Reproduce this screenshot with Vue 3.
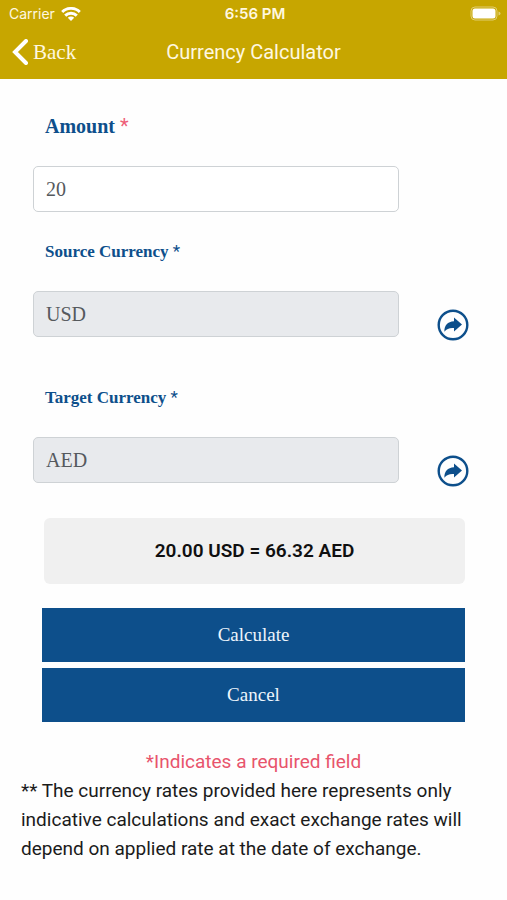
<script setup>
import { ref } from 'vue'

const amount = ref('20')
const source = ref('USD')
const target = ref('AED')
const rates = { 'USD-AED': 3.316 }
const result = ref('20.00 USD = 66.32 AED')

function calculate() {
  const value = Number(amount.value) || 0
  const rate = rates[`${source.value}-${target.value}`] ?? 1
  result.value = `${value.toFixed(2)} ${source.value} = ${(value * rate).toFixed(2)} ${target.value}`
}

function cancel() {
  amount.value = ''
  result.value = ''
}
</script>

<template>
  <div class="screen">
    <header class="top">
      <div class="status">
        <div class="carrier">
          <span>Carrier</span>
          <svg class="wifi" viewBox="0 0 20 14" aria-hidden="true">
            <path d="M1.2 5 A12.6 12.6 0 0 1 18.8 5" />
            <path d="M4.2 8.6 A8.2 8.2 0 0 1 15.8 8.6" />
            <path class="dot" d="M10 14 L6.8 10.8 A4.5 4.5 0 0 1 13.2 10.8 Z" />
          </svg>
        </div>
        <span class="time">6:56 PM</span>
        <svg class="battery" viewBox="0 0 31 15" aria-hidden="true">
          <rect class="shell" x="1" y="1" width="26" height="13" rx="4" />
          <rect class="charge" x="2.5" y="2.5" width="23" height="10" rx="2.5" />
          <path class="tip" d="M28.5 5.5 Q30.5 6 30.5 7.5 Q30.5 9 28.5 9.5 Z" />
        </svg>
      </div>
      <nav class="bar">
        <a class="back" href="#">
          <svg class="chevron" viewBox="0 0 16 26" aria-hidden="true">
            <path d="M14 2 L3 13 L14 24" />
          </svg>
          <span>Back</span>
        </a>
        <h1>Currency Calculator</h1>
      </nav>
    </header>

    <form class="form" @submit.prevent="calculate">
      <div class="field first">
        <label for="amount">Amount <span class="star">*</span></label>
        <div class="row">
          <input id="amount" v-model="amount" type="text" inputmode="decimal" />
        </div>
      </div>

      <div class="field second">
        <label for="source">Source Currency <span class="star">*</span></label>
        <div class="row">
          <input id="source" v-model="source" type="text" readonly />
          <button class="pick" type="button" aria-label="Choose source currency">
            <svg viewBox="0 0 32 32" aria-hidden="true">
              <circle cx="16" cy="16" r="14.3" />
              <path d="M17 8.6 L25 15.6 L17 22.4 V19 C12.8 18.6 9.8 19.6 7.4 22.8 C7.2 16.4 10.6 12.6 17 12.2 Z" />
            </svg>
          </button>
        </div>
      </div>

      <div class="field third">
        <label for="target">Target Currency <span class="star">*</span></label>
        <div class="row">
          <input id="target" v-model="target" type="text" readonly />
          <button class="pick" type="button" aria-label="Choose target currency">
            <svg viewBox="0 0 32 32" aria-hidden="true">
              <circle cx="16" cy="16" r="14.3" />
              <path d="M17 8.6 L25 15.6 L17 22.4 V19 C12.8 18.6 9.8 19.6 7.4 22.8 C7.2 16.4 10.6 12.6 17 12.2 Z" />
            </svg>
          </button>
        </div>
      </div>

      <output class="result" for="amount source target">{{ result }}</output>

      <div class="actions">
        <button type="submit">Calculate</button>
        <button type="button" @click="cancel">Cancel</button>
      </div>
    </form>

    <footer class="notes">
      <p class="required">*Indicates a required field</p>
      <p>** The currency rates provided here represents only indicative calculations and exact exchange rates will depend on applied rate at the date of exchange.</p>
    </footer>
  </div>
</template>

<style>
body {
  background: #fefefe;
}
</style>

<style scoped>
.screen {
  font-family: Roboto, "Liberation Sans", sans-serif;
  color: #1b1b1b;
}

.top {
  background: #c7a600;
  color: #fff8e0;
}

.status {
  display: grid;
  grid-template-columns: 1fr auto 1fr;
  align-items: center;
  height: 27px;
  padding: 0 6px 0 9px;
  font-family: Inter, sans-serif;
  font-size: 14px;
}

.carrier {
  display: flex;
  align-items: center;
  gap: 6px;
}

.wifi {
  width: 20px;
  height: 14px;
  fill: none;
  stroke: #fff;
  stroke-width: 2.9;
}

.wifi .dot {
  fill: #fff;
  stroke: none;
}

.time {
  font-size: 15px;
  font-weight: 600;
}

.battery {
  justify-self: end;
  width: 31px;
  height: 15px;
}

.shell {
  fill: none;
  stroke: #e0cd70;
}

.charge {
  fill: #fff;
}

.tip {
  fill: #e0cd70;
}

.bar {
  display: grid;
  grid-template-columns: 1fr auto 1fr;
  align-items: center;
  height: 52px;
  padding: 0 12px 2px;
  box-sizing: border-box;
}

.back {
  display: flex;
  align-items: center;
  gap: 5px;
  color: inherit;
  font-family: "Liberation Serif", serif;
  font-size: 21px;
  text-decoration: none;
}

.chevron {
  width: 16px;
  height: 26px;
  fill: none;
  stroke: #fff;
  stroke-width: 4;
  stroke-linecap: round;
}

h1 {
  margin: 0;
  font-size: 20px;
  font-weight: 400;
}

.form {
  padding: 35px 42px 0 33px;
}

.field label {
  display: block;
  padding-left: 12px;
  color: #0d4f8b;
  font-family: "Liberation Serif", serif;
  font-size: 17px;
  font-weight: 700;
  line-height: 24px;
}

.field.first label {
  font-size: 20px;
}

.star {
  font-family: Roboto, sans-serif;
  font-weight: 400;
  line-height: 1;
}

.first .star {
  color: #ee5f78;
}

.row {
  display: grid;
  grid-template-columns: 1fr 32px;
  gap: 38px;
  margin-right: -4px;
  padding-top: 27px;
}

.first .row {
  padding-top: 28px;
}

.second {
  padding-top: 28px;
}

.third {
  padding-top: 49px;
}

.row input {
  width: 100%;
  height: 46px;
  box-sizing: border-box;
  padding: 0 12px;
  border: 1px solid #ced2d5;
  border-radius: 5px;
  background: #fff;
  color: #55595d;
  font-family: "Liberation Serif", serif;
  font-size: 20px;
}

.row input:read-only {
  background: #e8eaed;
}

.pick {
  align-self: end;
  width: 32px;
  height: 32px;
  margin-bottom: -4px;
  padding: 0;
  border: 0;
  background: none;
}

.pick svg {
  display: block;
  width: 32px;
  height: 32px;
}

.pick circle {
  fill: none;
  stroke: #0d4f8b;
  stroke-width: 2.4;
}

.pick path {
  fill: #0d4f8b;
}

.result {
  display: grid;
  place-items: center;
  height: 66px;
  box-sizing: border-box;
  margin: 35px 0 0 11px;
  padding-bottom: 2px;
  border-radius: 6px;
  background: #f0f0f0;
  color: #101010;
  font-size: 19px;
  font-weight: 600;
}

.actions {
  display: grid;
  gap: 6px;
  margin: 24px 0 0 9px;
}

.actions button {
  height: 54px;
  border: 0;
  background: #0d4f8b;
  color: #eef5fc;
  font-family: "Liberation Serif", serif;
  font-size: 19px;
}

.notes {
  padding: 25px 21px;
  font-size: 19px;
  line-height: 29px;
}

.notes p {
  margin: 0;
}

.notes .required {
  color: #e8546c;
  text-align: center;
}
</style>
